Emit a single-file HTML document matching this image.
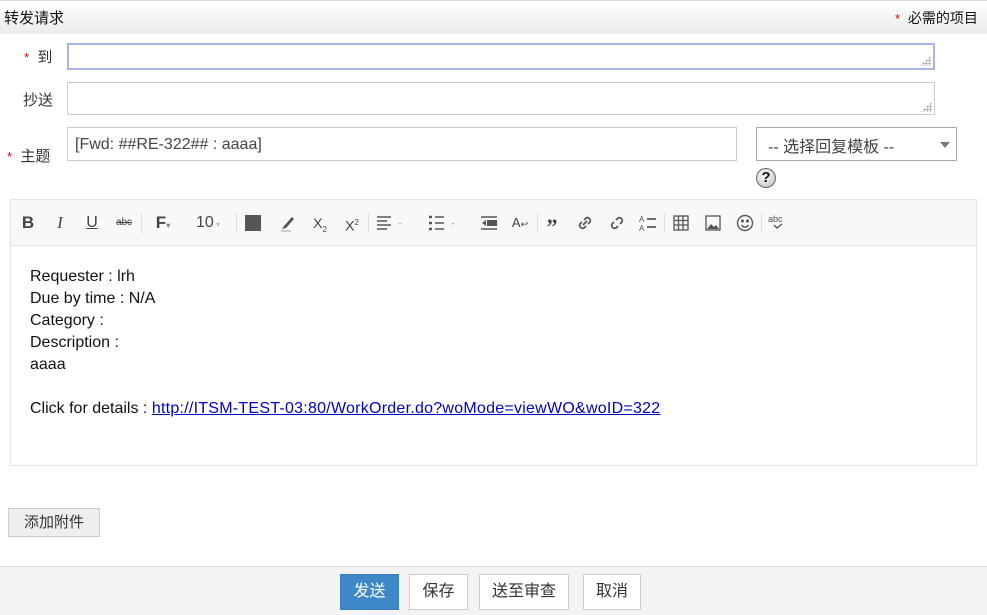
<!DOCTYPE html>
<html><head><meta charset="utf-8"><style>
*{box-sizing:border-box;margin:0;padding:0}
body{width:987px;height:615px;position:relative;overflow:hidden;background:#fff;font-family:"Liberation Sans","Noto Sans CJK SC",sans-serif;color:#222}
.a{position:absolute}
.hdr{left:0;top:0;width:987px;height:34px;background:linear-gradient(#fff,#ebebeb);border-top:1px solid #ddd}
.in{border:1px solid #ccc;background:#fff}
.lbl{font-size:15px;color:#333}
.star{color:#e00;font-size:13px}
.grip{width:12px;height:10px;right:2px;bottom:2px;background:
radial-gradient(circle,#999 1px,transparent 1.2px) 0 0/3px 3px;clip-path:polygon(100% 0,100% 100%,0 100%)}
.tb{font-size:15px;color:#444;top:212px;height:22px;line-height:22px;text-align:center}
.sep{width:1px;height:20px;background:#ddd;top:213px}
.btn{top:574px;height:36px;border:1px solid #ccc;background:#fff;font-size:16px;line-height:34px;text-align:center;color:#333}
.txt{font-size:16px;line-height:22px;color:#111}
</style></head><body>
<div class="a hdr"></div>
<div class="a" style="left:4px;top:7px;font-size:15px;color:#111">转发请求</div>
<div class="a" style="left:895px;top:8px;font-size:14px;color:#111"><span class="star">*</span>&nbsp;&nbsp;必需的项目</div>

<div class="a lbl" style="left:24px;top:46px"><span class="star">*</span>&nbsp; 到</div>
<div class="a in" style="left:67px;top:43px;width:868px;height:27px;border:2px solid #a7b6ea"><div class="a grip"></div></div>
<div class="a lbl" style="left:23px;top:89px">抄送</div>
<div class="a in" style="left:67px;top:82px;width:868px;height:33px"><div class="a grip"></div></div>
<div class="a lbl" style="left:7px;top:145px"><span class="star">*</span>&nbsp; 主题</div>
<div class="a in" style="left:67px;top:127px;width:670px;height:34px;font-size:16px;color:#444;padding:8px 7px 0">[Fwd: ##RE-322## : aaaa]</div>
<div class="a in" style="left:756px;top:127px;width:201px;height:34px;border-color:#aaa;font-size:16px;color:#444;padding:5px 11px">-- 选择回复模板 --</div>
<div class="a" style="left:940px;top:142px;width:0;height:0;border-left:5px solid transparent;border-right:5px solid transparent;border-top:6px solid #777"></div>
<div class="a" style="left:756px;top:168px;width:20px;height:20px;border-radius:50%;background:radial-gradient(circle at 40% 35%,#fff,#bbb);border:1px solid #666;font:bold 15px/18px 'Liberation Sans';text-align:center;color:#111">?</div>

<div class="a" style="left:10px;top:199px;width:967px;height:267px;border:1px solid #e3e3e3"></div>
<div class="a" style="left:11px;top:200px;width:965px;height:46px;background:#f8f8f8;border-bottom:1px solid #e5e5e5"></div>
<div class="a tb" style="left:20px;width:16px;font-weight:bold;font-size:17px">B</div>
<div class="a tb" style="left:52px;width:16px;font-style:italic;font-size:17px;font-family:'Liberation Serif'">I</div>
<div class="a tb" style="left:84px;width:16px;text-decoration:underline;font-size:16px">U</div>
<div class="a tb" style="left:115px;width:18px;font-size:10px;text-decoration:line-through">abc</div>
<div class="a sep" style="left:141px"></div>
<div class="a tb" style="left:152px;width:22px;font-weight:bold;font-size:17px">F<span style="font-size:8px;color:#888">▾</span></div>
<div class="a tb" style="left:190px;width:36px;font-size:16px">10<span style="font-size:8px;color:#bbb"> ▾</span></div>
<div class="a sep" style="left:236px"></div>
<div class="a" style="left:245px;top:215px;width:16px;height:16px;background:#555"></div>
<svg class="a" style="left:279px;top:214px" width="18" height="18"><path d="M3 15 L7 14 L15 5 L13 3 L5 12Z" fill="#555"/><path d="M2 17h10" stroke="#ccc" stroke-width="2"/></svg>
<div class="a tb" style="left:310px;width:20px;font-size:14px">X<sub style="font-size:8px">2</sub></div>
<div class="a tb" style="left:342px;width:20px;font-size:14px">X<sup style="font-size:8px">2</sup></div>
<div class="a sep" style="left:368px"></div>
<svg class="a" style="left:376px;top:214px" width="30" height="18"><path d="M1 3h14M1 7h10M1 11h14M1 15h10" stroke="#555" stroke-width="1.6"/><path d="M22 9l2 2 2-2" fill="#bbb"/></svg>
<svg class="a" style="left:428px;top:214px" width="30" height="18"><path d="M1 3h3M1 9h3M1 15h3" stroke="#555" stroke-width="2.4"/><path d="M7 3h9M7 9h9M7 15h9" stroke="#555" stroke-width="1.6"/><path d="M23 9l2 2 2-2" fill="#bbb"/></svg>
<svg class="a" style="left:480px;top:214px" width="18" height="18"><path d="M1 3h16M1 15h16" stroke="#555" stroke-width="1.6"/><rect x="7" y="6" width="10" height="6" fill="#555"/><path d="M2 9l4-3v6z" fill="#555"/></svg>
<div class="a tb" style="left:511px;width:18px;font-size:13px">A<span style="font-size:9px">↩</span></div>
<div class="a sep" style="left:537px"></div>
<div class="a tb" style="left:543px;width:18px;font-weight:bold;font-size:22px;font-family:'Liberation Serif';line-height:30px">”</div>
<svg class="a" style="left:576px;top:214px" width="18" height="18" fill="none" stroke="#555" stroke-width="1.7"><path d="M8 6l2-2a3 3 0 014 4l-2 2M10 12l-2 2a3 3 0 01-4-4l2-2M7 11l4-4"/></svg>
<svg class="a" style="left:608px;top:214px" width="18" height="18" fill="none" stroke="#555" stroke-width="1.7"><path d="M8 6l2-2a3 3 0 014 4l-2 2M10 12l-2 2a3 3 0 01-4-4l2-2"/></svg>
<svg class="a" style="left:639px;top:214px" width="18" height="18"><text x="0" y="8" font-size="8" fill="#555" font-family="Liberation Sans">A</text><text x="0" y="17" font-size="8" fill="#555" font-family="Liberation Sans">A</text><path d="M8 5h9M8 13h9" stroke="#555" stroke-width="1.8"/></svg>
<div class="a sep" style="left:664px"></div>
<svg class="a" style="left:673px;top:215px" width="16" height="16" fill="none" stroke="#555" stroke-width="1.3"><rect x="1" y="1" width="14" height="14"/><path d="M1 5.5h14M1 10h14M5.5 1v14M10 1v14"/></svg>
<svg class="a" style="left:705px;top:215px" width="16" height="16"><rect x="1" y="1" width="14" height="14" fill="none" stroke="#555" stroke-width="1.3"/><path d="M2 14l4-5 3 3 2-2 3 4z" fill="#555"/></svg>
<svg class="a" style="left:736px;top:214px" width="18" height="18" fill="none" stroke="#555" stroke-width="1.4"><circle cx="9" cy="9" r="7.5"/><circle cx="6.5" cy="7" r=".8" fill="#555"/><circle cx="11.5" cy="7" r=".8" fill="#555"/><path d="M5.5 11a4 4 0 007 0"/></svg>
<div class="a sep" style="left:761px"></div>
<svg class="a" style="left:767px;top:213px" width="20" height="20"><text x="1" y="9" font-size="9" fill="#555" font-family="Liberation Sans">abc</text><path d="M7 12l3 3 5-4" fill="none" stroke="#555" stroke-width="1.4"/></svg>

<div class="a txt" style="left:30px;top:266px">Requester : lrh<br>Due by time : N/A<br>Category :<br>Description :<br>aaaa<br><br>Click for details : <span style="color:#00c;text-decoration:underline;letter-spacing:0.25px">http://ITSM-TEST-03:80/WorkOrder.do?woMode=viewWO&amp;woID=322</span></div>

<div class="a" style="left:8px;top:508px;width:92px;height:29px;background:#eee;border:1px solid #ccc;font-size:15px;line-height:27px;text-align:center;color:#333">添加附件</div>

<div class="a" style="left:0;top:566px;width:987px;height:49px;background:#f3f3f3;border-top:1px solid #ddd"></div>
<div class="a btn" style="left:340px;width:59px;background:#3f88c8;border-color:#3a7fbd;color:#fff">发送</div>
<div class="a btn" style="left:409px;width:59px">保存</div>
<div class="a btn" style="left:479px;width:90px">送至审查</div>
<div class="a btn" style="left:583px;width:58px">取消</div>
</body></html>
